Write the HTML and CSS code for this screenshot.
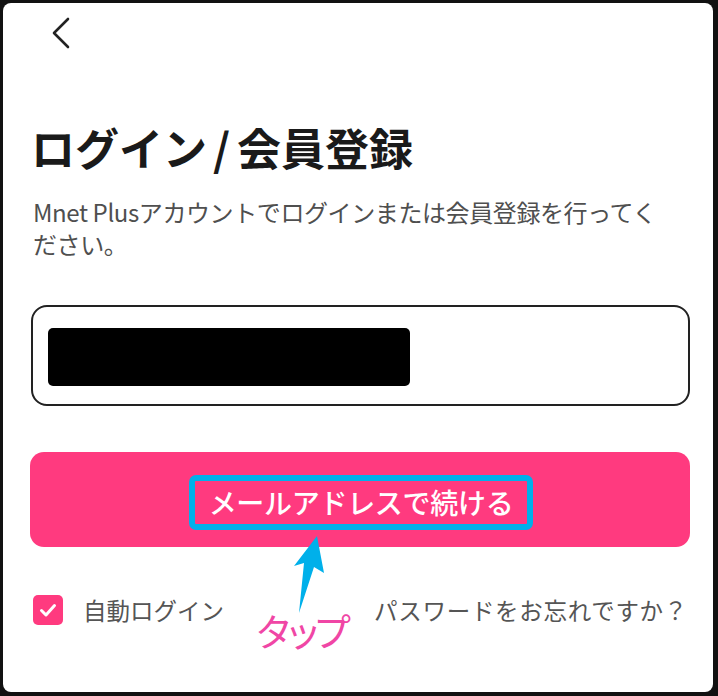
FILE: index.html
```html
<!DOCTYPE html>
<html lang="ja">
<head>
<meta charset="utf-8">
<title>ログイン/会員登録</title>
<link rel="stylesheet" href="styles.css">
</head>
<body>
<div class="screen">
  <div class="card">
    <div class="topbar">
      <svg class="back" viewBox="0 0 19 32" width="19" height="32" aria-label="戻る">
        <polyline points="17,2 3,16 17,30" fill="none" stroke="#222" stroke-width="2.6" stroke-linecap="round" stroke-linejoin="round"/>
      </svg>
    </div>
    <div class="content">
      <h1 class="title">ログイン<span class="slash">/</span>会員登録</h1>
      <p class="lead">Mnet Plusアカウントでログインまたは会員登録を行ってく<br>ださい。</p>
      <div class="field"><div class="redact"></div></div>
      <button class="cta" type="button"><span class="cta-label">メールアドレスで続ける</span></button>
      <div class="options">
        <label class="auto">
          <span class="check">
            <svg viewBox="0 0 30 30" width="30" height="30"><polyline points="8.5,15.5 13,20 21.5,10.5" fill="none" stroke="#fff" stroke-width="3" stroke-linecap="round" stroke-linejoin="round"/></svg>
          </span>
          <span class="auto-text">自動ログイン</span>
        </label>
        <span class="forgot">パスワードをお忘れですか？</span>
      </div>
    </div>
  </div>
  <svg class="arrow" viewBox="0 0 38 84" width="38" height="84">
    <polygon points="27,4 34,41 24,35 9,81 14,31 4,34" fill="#00B0EA"/>
  </svg>
  <span class="tap">タップ</span>
</div>
</body>
</html>
```

FILE: styles.css
```css
html, body {
  margin: 0;
  padding: 0;
  background: #111;
}
.screen {
  position: relative;
  width: 718px;
  height: 696px;
  padding: 3px 5px 4px 3px;
  box-sizing: border-box;
  font-family: "Noto Sans CJK JP", "Noto Sans", sans-serif;
}
.card {
  height: 100%;
  background: #fff;
  border-radius: 8px;
  display: flex;
  flex-direction: column;
}
.topbar {
  height: 60px;
  padding: 14px 0 0 48px;
  box-sizing: border-box;
}
.back {
  display: block;
}
.content {
  padding: 0 23px 0 28px;
  display: flex;
  flex-direction: column;
}
.title {
  margin: 58px 0 0 0;
  font-size: 44px;
  line-height: 52px;
  font-weight: 700;
  color: #1a1a1a;
}
.slash {
  margin: 0 7px 0 6px;
}
.lead {
  margin: 23px 0 0 2px;
  font-size: 24px;
  line-height: 32px;
  color: #4f4f4f;
  white-space: nowrap;
  letter-spacing: -0.4px;
}
.field {
  margin-top: 45px;
  height: 101px;
  border: 2px solid #222;
  border-radius: 16px;
  box-sizing: border-box;
  padding: 21px 0 0 15px;
}
.redact {
  width: 362px;
  height: 58px;
  background: #000;
  border-radius: 5px;
}
.cta {
  margin: 46px 0 0 -1px;
  height: 95px;
  border: 0;
  border-radius: 14px;
  background: #ff3a7f;
  display: flex;
  align-items: center;
  justify-content: center;
  padding: 6px 0 0 0;
  font-family: inherit;
  cursor: pointer;
}
.cta-label {
  display: block;
  width: 344px;
  height: 55px;
  box-sizing: border-box;
  border: 6px solid #00b0ea;
  border-radius: 7px;
  color: #fff;
  font-size: 28px;
  line-height: 42px;
  font-weight: 500;
  text-align: center;
  margin-left: 2px;
  letter-spacing: -0.3px;
}
.options {
  margin-top: 48px;
  height: 30px;
  display: flex;
  align-items: center;
  justify-content: space-between;
}
.auto {
  display: flex;
  align-items: center;
  gap: 20px;
  margin-left: 2px;
}
.check {
  width: 30px;
  height: 30px;
  border-radius: 5px;
  background: #ff3a7f;
  display: block;
}
.check svg {
  display: block;
}
.auto-text, .forgot {
  font-size: 23.5px;
  line-height: 30px;
  color: #555;
  font-weight: 400;
}
.forgot {
  margin-right: 2px;
  letter-spacing: 0.7px;
}
.arrow {
  position: absolute;
  left: 290px;
  top: 532px;
}
.tap {
  position: absolute;
  left: 255px;
  top: 611px;
  font-size: 38px;
  line-height: 38px;
  letter-spacing: -9px;
  color: #f046a5;
  font-weight: 400;
}
```
